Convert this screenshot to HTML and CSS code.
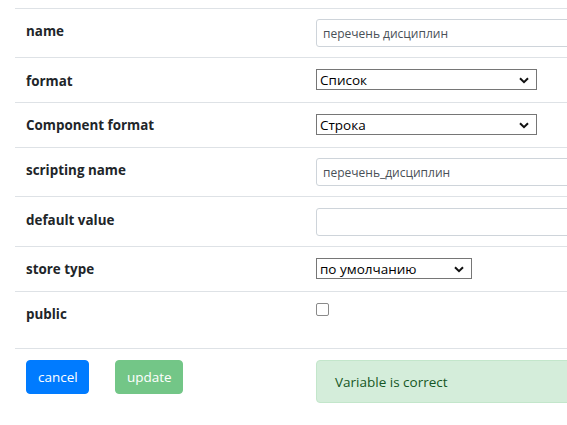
FILE: index.html
```html
<!DOCTYPE html>
<html>
<head>
<meta charset="utf-8">
<link rel="stylesheet" href="styles.css">
</head>
<body>
<div class="page">
  <table class="props">
    <tr>
      <td class="lbl">name</td>
      <td class="val val-input"><input class="field" type="text" value="перечень дисциплин"></td>
    </tr>
    <tr>
      <td class="lbl lbl-low">format</td>
      <td class="val val-select">
        <div class="select sel-wide"><span>Список</span><svg class="chev" viewBox="0 0 10 7" width="10" height="7"><path d="M1 1.2 L5 5.2 L9 1.2" fill="none" stroke="#111" stroke-width="2"/></svg></div>
      </td>
    </tr>
    <tr>
      <td class="lbl">Component format</td>
      <td class="val val-select">
        <div class="select sel-wide"><span>Строка</span><svg class="chev" viewBox="0 0 10 7" width="10" height="7"><path d="M1 1.2 L5 5.2 L9 1.2" fill="none" stroke="#111" stroke-width="2"/></svg></div>
      </td>
    </tr>
    <tr>
      <td class="lbl">scripting name</td>
      <td class="val val-input"><input class="field" type="text" value="перечень_дисциплин"></td>
    </tr>
    <tr>
      <td class="lbl lbl-low">default value</td>
      <td class="val val-input val-input-b"><input class="field" type="text" value=""></td>
    </tr>
    <tr>
      <td class="lbl">store type</td>
      <td class="val val-select">
        <div class="select sel-narrow"><span>по умолчанию</span><svg class="chev" viewBox="0 0 10 7" width="10" height="7"><path d="M1 1.2 L5 5.2 L9 1.2" fill="none" stroke="#111" stroke-width="2"/></svg></div>
      </td>
    </tr>
    <tr>
      <td class="lbl">public</td>
      <td class="val val-check"><span class="check"></span></td>
    </tr>
    <tr>
      <td class="actions-cell">
        <div class="buttons">
          <button class="btn btn-cancel">cancel</button>
          <button class="btn btn-update">update</button>
        </div>
      </td>
      <td class="val val-alert"><div class="alert">Variable is correct</div></td>
    </tr>
  </table>
</div>
</body>
</html>
```

FILE: styles.css
```css
html, body {
  margin: 0;
  padding: 0;
  background: #ffffff;
  overflow: hidden;
}
body {
  font-family: "Open Sans", "Noto Sans", "Liberation Sans", sans-serif;
  color: #212529;
}
.page {
  padding: 8px 0 0 15px;
}
.props {
  border-collapse: collapse;
  width: 640px;
  table-layout: fixed;
}
.props td {
  border-top: 1px solid #dee2e6;
  vertical-align: top;
}
.lbl {
  width: 278px;
  padding: 12px 0 0 11px;
  font-weight: 700;
  font-size: 13.4px;
  line-height: 20px;
  color: #212529;
}
.lbl-low {
  padding-top: 13px;
}
.val {
  padding: 0 0 0 12px;
}
.val-input {
  padding-top: 10px;
  padding-bottom: 10px;
}
.val-input-b {
  padding-top: 11px;
  padding-bottom: 10px;
}
.val-select {
  padding-top: 11px;
  padding-bottom: 12px;
}
.val-check {
  padding-top: 11px;
  padding-bottom: 32px;
}
.field {
  display: block;
  box-sizing: border-box;
  width: 320px;
  height: 28px;
  margin: 0;
  padding: 0 6px;
  border: 1px solid #ced4da;
  border-radius: 3px;
  font-family: "Open Sans", "Noto Sans", sans-serif;
  font-size: 12px;
  color: #495057;
  background: #fff;
  outline: none;
}
.select {
  box-sizing: border-box;
  height: 21px;
  border: 1px solid #767676;
  background: #fff;
  display: flex;
  align-items: center;
  justify-content: space-between;
  padding: 1px 7px 0 3px;
  font-size: 13.5px;
  color: #000;
}
.sel-wide { width: 221px; }
.sel-narrow { width: 156px; }
.chev { display: block; }
.check {
  display: block;
  width: 11px;
  height: 11px;
  border: 1px solid #8a8a8a;
  border-radius: 2px;
  background: #fff;
}
.actions-cell {
  padding: 11px 0 0 11px;
}
.buttons {
  display: flex;
  gap: 26px;
}
.btn {
  font-family: "Open Sans", "Noto Sans", sans-serif;
  font-size: 13.5px;
  line-height: 20px;
  padding: 6px 11px;
  border: 1px solid transparent;
  border-radius: 4px;
  color: #fff;
}
.btn-cancel {
  background: #007bff;
  border-color: #007bff;
  width: 63px;
}
.btn-update {
  background: #73c687;
  border-color: #73c687;
  width: 68px;
}
.val-alert {
  padding-top: 11px;
  padding-bottom: 20px;
}
.alert {
  box-sizing: border-box;
  width: 320px;
  height: 43px;
  padding: 12px 18px 10px;
  background: #d4edda;
  border: 1px solid #c3e6cb;
  border-radius: 4px;
  color: #155724;
  font-size: 13.5px;
  line-height: 19px;
}
```
